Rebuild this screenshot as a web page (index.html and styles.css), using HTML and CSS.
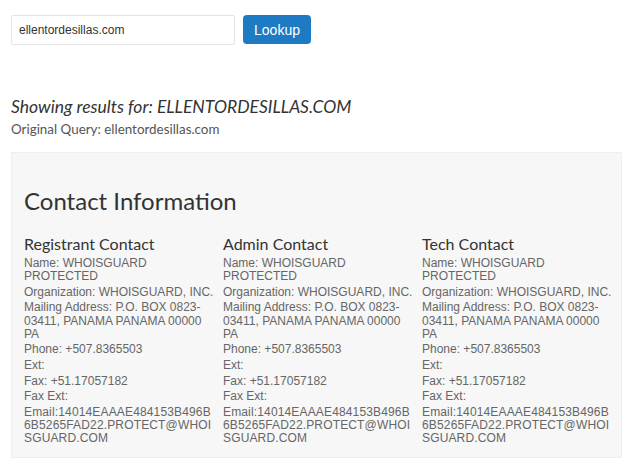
FILE: index.html
```html
<!DOCTYPE html>
<html>
<head>
<meta charset="utf-8">
<link rel="stylesheet" href="styles.css">
</head>
<body>
<div class="page">
  <form class="search">
    <input class="search-input" type="text" value="ellentordesillas.com">
    <button class="btn" type="button">Lookup</button>
  </form>
  <h2 class="results-title">Showing results for: ELLENTORDESILLAS.COM</h2>
  <div class="query">Original Query: ellentordesillas.com</div>
  <div class="panel">
    <h1 class="panel-title">Contact Information</h1>
    <div class="columns">
      <div class="contact">
        <h3 class="contact-title">Registrant Contact</h3>
        <p>Name: WHOISGUARD PROTECTED</p>
        <p>Organization: WHOISGUARD, INC.</p>
        <p>Mailing Address: P.O. BOX 0823-03411, PANAMA PANAMA 00000 PA</p>
        <p>Phone: +507.8365503</p>
        <p>Ext:</p>
        <p>Fax: +51.17057182</p>
        <p>Fax Ext:</p>
        <p class="email">Email:14014EAAAE484153B496B6B5265FAD22.PROTECT@WHOISGUARD.COM</p>
      </div>
      <div class="contact">
        <h3 class="contact-title">Admin Contact</h3>
        <p>Name: WHOISGUARD PROTECTED</p>
        <p>Organization: WHOISGUARD, INC.</p>
        <p>Mailing Address: P.O. BOX 0823-03411, PANAMA PANAMA 00000 PA</p>
        <p>Phone: +507.8365503</p>
        <p>Ext:</p>
        <p>Fax: +51.17057182</p>
        <p>Fax Ext:</p>
        <p class="email">Email:14014EAAAE484153B496B6B5265FAD22.PROTECT@WHOISGUARD.COM</p>
      </div>
      <div class="contact">
        <h3 class="contact-title">Tech Contact</h3>
        <p>Name: WHOISGUARD PROTECTED</p>
        <p>Organization: WHOISGUARD, INC.</p>
        <p>Mailing Address: P.O. BOX 0823-03411, PANAMA PANAMA 00000 PA</p>
        <p>Phone: +507.8365503</p>
        <p>Ext:</p>
        <p>Fax: +51.17057182</p>
        <p>Fax Ext:</p>
        <p class="email">Email:14014EAAAE484153B496B6B5265FAD22.PROTECT@WHOISGUARD.COM</p>
      </div>
    </div>
  </div>
</div>
</body>
</html>
```
FILE: styles.css
```css
html, body {
  margin: 0;
  padding: 0;
  background: #fff;
}
body {
  font-family: "Liberation Sans", Arial, sans-serif;
  color: #333;
}
.page {
  padding: 15px 18px 0 11px;
}
.search {
  display: flex;
  align-items: flex-start;
  gap: 8px;
  margin: 0;
}
.search-input {
  box-sizing: border-box;
  width: 224px;
  height: 30px;
  margin: 0;
  padding: 0 7px;
  border: 1px solid #e3e3e3;
  border-radius: 2px;
  font-family: "Liberation Sans", Arial, sans-serif;
  font-size: 12px;
  color: #333;
  background: #fff;
  outline: none;
}
.btn {
  box-sizing: border-box;
  width: 68px;
  height: 29px;
  margin: 0;
  padding: 0;
  border: 0;
  border-radius: 4px;
  background: #1e7bc3;
  color: #fff;
  font-family: "Liberation Sans", Arial, sans-serif;
  font-size: 14px;
}
.results-title {
  margin: 51px 0 0;
  font-family: Lato, sans-serif;
  font-style: italic;
  font-weight: 400;
  font-size: 17.5px;
  line-height: 22px;
  color: #333;
}
.query {
  margin-top: 3px;
  font-family: Lato, sans-serif;
  font-size: 13.4px;
  line-height: 16px;
  color: #555;
}
.panel {
  margin-top: 15px;
  height: 306px;
  box-sizing: border-box;
  background: #f7f7f7;
  border: 1px solid #efefef;
  padding: 0 12px;
}
.panel-title {
  margin: 33px 0 0;
  font-family: Lato, sans-serif;
  font-weight: 400;
  font-size: 24px;
  line-height: 30px;
  color: #333;
}
.columns {
  display: grid;
  grid-template-columns: repeat(3, 199px);
  margin-top: 18px;
}
.contact-title {
  margin: 0 0 4px;
  font-family: Lato, sans-serif;
  font-weight: 400;
  font-size: 16px;
  line-height: 19px;
  color: #333;
}
.contact p {
  margin: 0 0 2.4px;
  padding-right: 9px;
  font-size: 12px;
  line-height: 13.2px;
  color: #666;
}
.contact p.email {
  word-break: break-all;
  letter-spacing: 0.15px;
}
```
